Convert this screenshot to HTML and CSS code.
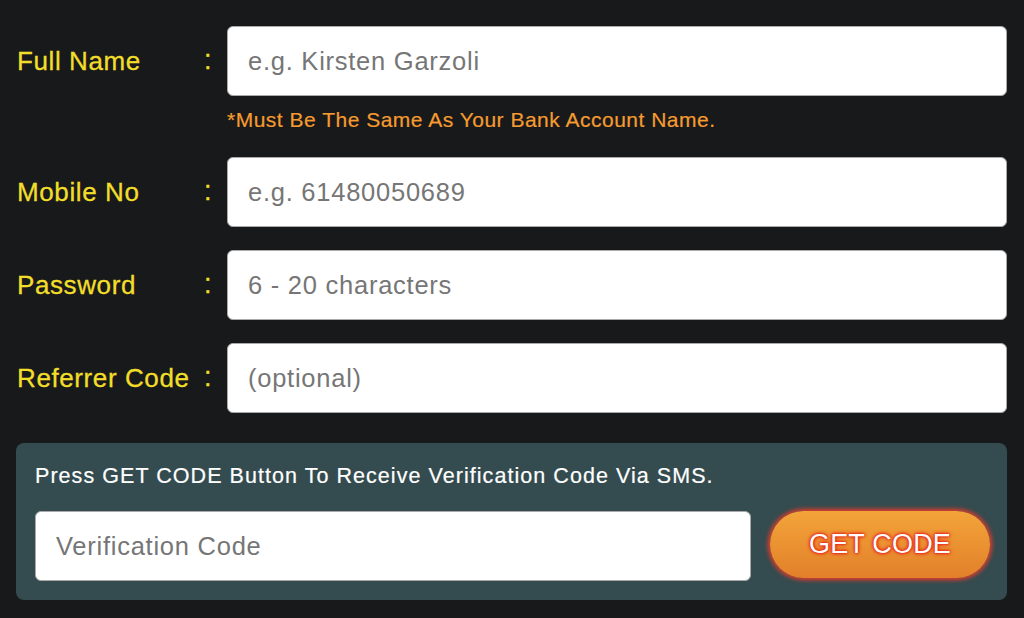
FILE: index.html
```html
<!DOCTYPE html>
<html lang="en">
<head>
    <meta charset="UTF-8">
    <meta name="viewport" content="width=device-width, initial-scale=1.0">
    <title>Register</title>
    <link rel="stylesheet" href="styles.css">
</head>
<body>
    <form class="register-form">
        <div class="form-row">
            <label class="field-label" for="full-name">Full Name</label>
            <span class="field-colon">:</span>
            <div class="field-box">
                <input type="text" id="full-name" placeholder="e.g. Kirsten Garzoli">
                <p class="field-note">*Must Be The Same As Your Bank Account Name.</p>
            </div>
        </div>
        <div class="form-row">
            <label class="field-label" for="mobile">Mobile No</label>
            <span class="field-colon">:</span>
            <div class="field-box">
                <input type="text" id="mobile" placeholder="e.g. 61480050689">
            </div>
        </div>
        <div class="form-row">
            <label class="field-label" for="password">Password</label>
            <span class="field-colon">:</span>
            <div class="field-box">
                <input type="password" id="password" placeholder="6 - 20 characters">
            </div>
        </div>
        <div class="form-row">
            <label class="field-label" for="referrer">Referrer Code</label>
            <span class="field-colon">:</span>
            <div class="field-box">
                <input type="text" id="referrer" placeholder="(optional)">
            </div>
        </div>

        <div class="verify-panel">
            <p class="verify-text">Press GET CODE Button To Receive Verification Code Via SMS.</p>
            <div class="verify-row">
                <input type="text" placeholder="Verification Code">
                <button type="button" class="code-btn">GET CODE</button>
            </div>
        </div>
    </form>
</body>
</html>
```

FILE: styles.css
```css
/* Basic Reset */
* {
    margin: 0;
    padding: 0;
    box-sizing: border-box;
}

body {
    font-family: 'Liberation Sans', Arial, Helvetica, sans-serif;
    background: #17191b;
    color: #ffffff;
}

/* Form */
.register-form {
    padding: 26px 17px 0 16px;
    display: flex;
    flex-direction: column;
}

.form-row {
    display: flex;
    align-items: flex-start;
    margin-bottom: 23px;
}

.field-label {
    width: 186px;
    padding-left: 1px;
    height: 70px;
    line-height: 70px;
    font-size: 26px;
    letter-spacing: 0.6px;
    color: #f2de2a;
    -webkit-text-stroke: 0.3px #f2de2a;
}

.field-colon {
    width: 25px;
    height: 70px;
    line-height: 68px;
    font-size: 27px;
    padding-left: 2px;
    color: #f2de2a;
    -webkit-text-stroke: 0.3px #f2de2a;
}

.field-box {
    flex: 1;
}

input {
    display: block;
    width: 100%;
    height: 70px;
    padding: 0 20px;
    border: 1px solid #a9a9a9;
    border-radius: 6px;
    background: #ffffff;
    font-family: inherit;
    font-size: 25.5px;
    letter-spacing: 0.75px;
    color: #333333;
    outline: none;
}

input::placeholder {
    color: #767676;
}

.field-note {
    margin-top: 12px;
    margin-bottom: 2px;
    font-size: 21px;
    line-height: 24px;
    letter-spacing: 0.5px;
    color: #f59b30;
    -webkit-text-stroke: 0.2px #f59b30;
}

/* Verification panel */
.verify-panel {
    margin-top: 7px;
    background: #344c4f;
    border-radius: 8px;
    padding: 20px 17px 19px 19px;
}

.verify-text {
    font-size: 21.5px;
    line-height: 26px;
    letter-spacing: 1.05px;
    margin-bottom: 22px;
    -webkit-text-stroke: 0.2px #ffffff;
}

.verify-row {
    display: flex;
    align-items: flex-start;
    gap: 19px;
}

.verify-row input {
    flex: 1;
}

.code-btn {
    width: 220px;
    height: 67px;
    border: none;
    border-radius: 34px;
    background: linear-gradient(180deg, #f3a439, #e2802a);
    box-shadow: 0 0 4px 2px #ec3a2c;
    font-family: inherit;
    font-size: 27px;
    letter-spacing: 0.2px;
    color: #ffffff;
    text-shadow: 0 0 2px #e81c18, 0 0 3px #e81c18, 0 0 4px #e81c18;
    cursor: pointer;
}
```
